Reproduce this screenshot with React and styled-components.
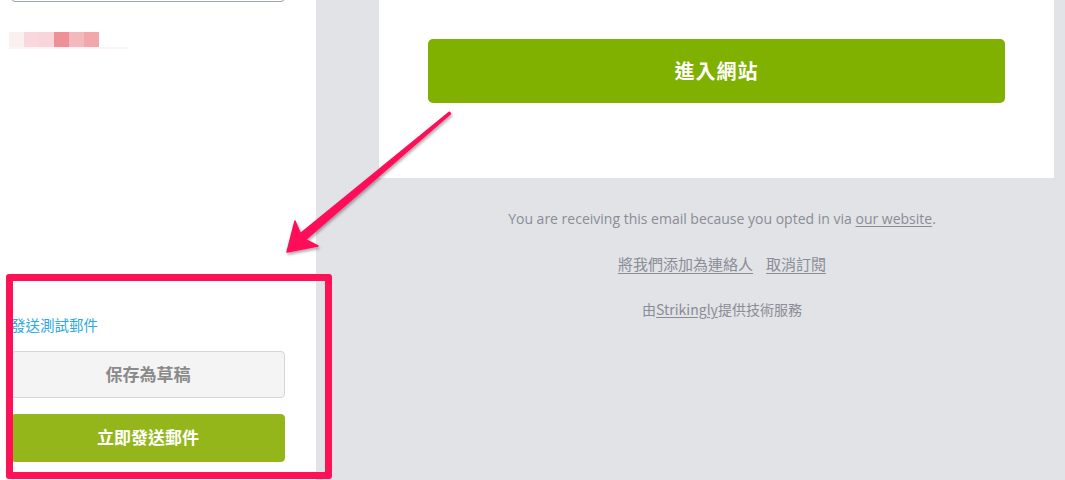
import styled, { createGlobalStyle } from 'styled-components';

const GlobalStyle = createGlobalStyle`
  html, body {
    margin: 0;
    padding: 0;
    height: 480px;
    overflow: hidden;
  }
  body {
    font-family: "Open Sans", "Noto Sans CJK TC", sans-serif;
  }
`;

const CJK = `"Noto Sans CJK TC", "Noto Sans", sans-serif`;

const blurCells = ['#fbeff0', '#f8d8dc', '#f8d5d9', '#ef8f96', '#f4b9bd', '#f1a7ab'];

const App = () => {
  return (
    <>
      <GlobalStyle />
      <Page>
        <Sidebar>
          <div>
            <InputStub />
            <BlurredName>
              {blurCells.map((c) => (
                <BlurCell key={c} $color={c} />
              ))}
            </BlurredName>
          </div>

          <Actions>
            <TestLink>發送測試郵件</TestLink>
            <Button $variant="draft">保存為草稿</Button>
            <Button $variant="send">立即發送郵件</Button>
          </Actions>
        </Sidebar>

        <Preview>
          <EmailColumn>
            <Card>
              <CtaButton>進入網站</CtaButton>
            </Card>

            <Footer>
              <FooterLine>
                You are receiving this email because you opted in via <u>our website</u>.
              </FooterLine>
              <FooterLinks>
                <FooterLink>將我們添加為連絡人</FooterLink>
                <FooterLink>取消訂閱</FooterLink>
              </FooterLinks>
              <FooterLine $cjk>
                由<u>Strikingly</u>提供技術服務
              </FooterLine>
            </Footer>
          </EmailColumn>
        </Preview>

        <Highlight />
        <Arrow viewBox="0 0 1065 480" width="1065" height="480">
          <defs>
            <filter id="shadow" x="-20%" y="-20%" width="140%" height="140%">
              <feDropShadow dx="1" dy="2" stdDeviation="1.5" floodColor="#000" floodOpacity="0.35" />
            </filter>
          </defs>
          <polygon
            points="449.4,112.2 300.4,233.6 295,221 287,252 318,246 305.6,239.6 450.6,113.8"
            fill="#ff1158"
            stroke="#ff1158"
            strokeWidth="1.5"
            strokeLinejoin="round"
            filter="url(#shadow)"
          />
        </Arrow>
      </Page>
    </>
  );
};

export default App;

const Page = styled.div`
  position: relative;
  display: flex;
  width: 1065px;
  height: 480px;
  overflow: hidden;
  background: #e1e3e7;
`;

const Sidebar = styled.aside`
  width: 316px;
  flex-shrink: 0;
  background: #fff;
  display: flex;
  flex-direction: column;
  justify-content: space-between;
  padding: 0 31px 18px 11px;
  box-sizing: border-box;
`;

const InputStub = styled.div`
  margin-top: -30px;
  height: 32px;
  border: 1px solid #9ea6ae;
  border-radius: 4px;
  box-sizing: border-box;
`;

const BlurredName = styled.div`
  display: flex;
  margin: 30px 0 0 -2px;
  width: 119px;
  border-bottom: 2px solid #fcf3f4;
`;

const BlurCell = styled.span`
  width: 15px;
  height: 15px;
  background: ${(p) => p.$color};
`;

const Actions = styled.div`
  display: flex;
  flex-direction: column;
  gap: 16px;
`;

const TestLink = styled.a`
  font-family: ${CJK};
  font-size: 14.5px;
  line-height: 20px;
  color: #2aa9e0;
`;

const Button = styled.button`
  display: flex;
  align-items: center;
  justify-content: center;
  width: 274px;
  height: ${(p) => (p.$variant === 'send' ? '48px' : '47px')};
  padding: 0 0 3px;
  border-radius: 4px;
  font-family: ${CJK};
  font-size: 17px;
  font-weight: 700;
  cursor: pointer;
  border: 1px solid ${(p) => (p.$variant === 'send' ? '#95b61b' : '#d6d6d6')};
  background: ${(p) => (p.$variant === 'send' ? '#95b61b' : '#f4f4f4')};
  color: ${(p) => (p.$variant === 'send' ? '#fff' : '#8a8a8a')};
`;

const Preview = styled.main`
  flex: 1;
  padding-left: 63px;
`;

const EmailColumn = styled.div`
  width: 686px;
`;

const Card = styled.section`
  width: 675px;
  height: 178px;
  background: #fff;
  padding-top: 39px;
  box-sizing: border-box;
`;

const CtaButton = styled.a`
  display: flex;
  align-items: center;
  justify-content: center;
  width: 577px;
  height: 64px;
  padding-bottom: 2px;
  box-sizing: border-box;
  margin: 0 auto;
  border-radius: 5px;
  background: #80b000;
  color: #fff;
  font-family: ${CJK};
  font-size: 20px;
  font-weight: 700;
  letter-spacing: 1px;
`;

const Footer = styled.footer`
  display: flex;
  flex-direction: column;
  align-items: center;
  gap: 25px;
  padding-top: 31px;
`;

const FooterLine = styled.p`
  margin: 0;
  text-align: center;
  font-family: ${(p) => (p.$cjk ? CJK : `"Open Sans", sans-serif`)};
  font-size: 14px;
  line-height: 20px;
  color: #8a8c96;

  u {
    text-underline-offset: 2px;
  }
`;

const FooterLinks = styled.p`
  margin: 0;
  display: flex;
  gap: 13px;
  font-family: ${CJK};
  font-size: 15px;
  line-height: 20px;
  color: #8a8c96;
`;

const FooterLink = styled.span`
  text-decoration: underline;
  text-underline-offset: 3px;
`;

const Highlight = styled.div`
  position: absolute;
  left: 6px;
  top: 274px;
  width: 326px;
  height: 205px;
  border: 7px solid #ff1158;
  border-radius: 3px;
  box-sizing: border-box;
  pointer-events: none;
`;

const Arrow = styled.svg`
  position: absolute;
  left: 0;
  top: 0;
  pointer-events: none;
`;
